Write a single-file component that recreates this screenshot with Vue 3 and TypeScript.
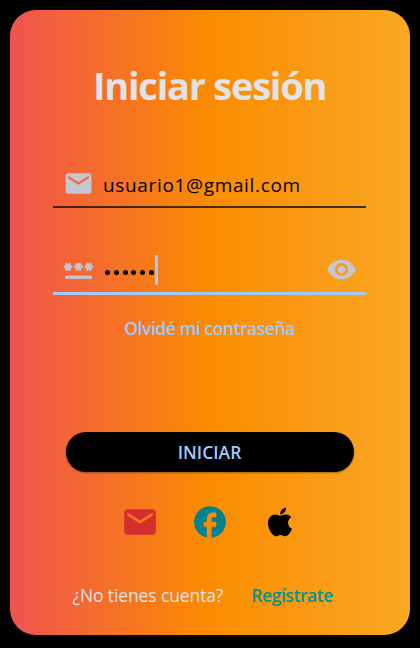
<script setup lang="ts">
import { ref } from 'vue'

const email = ref('usuario1@gmail.com')
const secret = ref('123456')

const mailPath =
  'M20 4H4c-1.1 0-1.99.9-1.99 2L2 18c0 1.1.9 2 2 2h16c1.1 0 2-.9 2-2V6c0-1.1-.9-2-2-2zm0 4-8 5-8-5V6l8 5 8-5v2z'
const socials = [
  { name: 'mail', path: mailPath },
  {
    name: 'facebook',
    path: 'M22 12c0-5.52-4.48-10-10-10S2 6.48 2 12c0 4.84 3.44 8.87 8 9.8V15H8v-3h2V9.5C10 7.57 11.57 6 13.5 6H16v3h-2c-.55 0-1 .45-1 1v2h3v3h-3v6.95c5.05-.5 9-4.76 9-9.95z',
  },
  {
    name: 'apple',
    path: 'M17.05 20.28c-.98.95-2.05.8-3.08.35-1.09-.46-2.09-.48-3.24 0-1.44.62-2.2.44-3.06-.35C2.79 15.25 3.51 7.59 9.05 7.31c1.35.07 2.29.74 3.08.8 1.18-.24 2.31-.93 3.57-.84 1.51.12 2.65.72 3.4 1.8-3.12 1.87-2.38 5.98.48 7.13-.57 1.5-1.31 2.99-2.54 4.09zM12.03 7.25c-.15-2.23 1.66-4.07 3.74-4.25.29 2.58-2.34 4.5-3.74 4.25z',
  },
]
</script>

<template>
  <main class="screen">
    <section class="card">
      <h1 class="title">Iniciar sesión</h1>
      <div class="field">
        <svg class="icon" viewBox="0 0 24 24"><path :d="mailPath" /></svg>
        <span class="value">{{ email }}</span>
      </div>
      <div class="field focused">
        <svg class="icon password" viewBox="0 0 24 24">
          <path
            d="M2 17h20v2H2v-2zm1.15-4.05L4 11.47l.85 1.48 1.3-.75-.85-1.48H7v-1.5H5.3l.85-1.47L4.85 7 4 8.47 3.15 7l-1.3.75.85 1.47H1v1.5h1.7l-.85 1.48 1.3.75zm6.7-.75 1.3.75.85-1.48.85 1.48 1.3-.75-.85-1.48H15v-1.5h-1.7l.85-1.47-1.3-.75L12 8.47 11.15 7l-1.3.75.85 1.47H9v1.5h1.7l-.85 1.48zM23 9.22h-1.7l.85-1.47-1.3-.75L20 8.47 19.15 7l-1.3.75.85 1.47H17v1.5h1.7l-.85 1.48 1.3.75.85-1.48.85 1.48 1.3-.75-.85-1.48H23v-1.5z"
          />
        </svg>
        <span class="dots"><i v-for="(_, i) in secret" :key="i" class="dot"></i></span>
        <span class="caret"></span>
        <svg class="icon eye" viewBox="0 0 24 24">
          <path
            d="M12 4.5C7 4.5 2.73 7.61 1 12c1.73 4.39 6 7.5 11 7.5s9.27-3.11 11-7.5c-1.73-4.39-6-7.5-11-7.5zM12 17c-2.76 0-5-2.24-5-5s2.24-5 5-5 5 2.24 5 5-2.24 5-5 5zm0-8c-1.66 0-3 1.34-3 3s1.34 3 3 3 3-1.34 3-3-1.34-3-3-3z"
          />
        </svg>
      </div>
      <a class="forgot">Olvidé mi contraseña</a>
      <button class="submit" type="button">INICIAR</button>
      <div class="socials">
        <svg v-for="s in socials" :key="s.name" :class="['social', s.name]" viewBox="0 0 24 24">
          <path :d="s.path" />
        </svg>
      </div>
      <footer class="foot">
        <span class="ask">¿No tienes cuenta?</span>
        <a class="register">Regístrate</a>
      </footer>
    </section>
  </main>
</template>

<style>
body {
  background: #000;
}
</style>

<style scoped>
.screen {
  box-sizing: border-box;
  height: 648px;
  padding: 10px 10.5px 13px 9.6px;
  background: #000;
  font-family: 'Open Sans', 'Noto Sans', sans-serif;
  white-space: nowrap;
}
.card {
  box-sizing: border-box;
  display: flex;
  flex-direction: column;
  align-items: center;
  height: 625px;
  border-radius: 26px;
  background: linear-gradient(90deg, #ef5350, #fb8c00 50%, #f9a825);
}
.title {
  margin: 48px 0 0;
  height: 54px;
  line-height: 54px;
  font-size: 38px;
  font-weight: 700;
  letter-spacing: -1.25px;
  color: #e2e2e9;
}
.field {
  box-sizing: border-box;
  display: flex;
  align-items: center;
  width: 313px;
  height: 50px;
  margin-top: 46px;
  padding: 2px 9px 0 10px;
  border-bottom: 2px solid rgba(20, 14, 10, 0.78);
}
.field.focused {
  height: 52px;
  margin-top: 35px;
  padding-top: 4px;
  border-bottom: 3px solid #9ecaff;
}
.icon {
  width: 31px;
  height: 31px;
  flex: none;
  fill: #c4c6d0;
}
.password {
  stroke: #c4c6d0;
  stroke-width: 0.65px;
}
.value {
  margin: 3px 0 0 9px;
  font-size: 19px;
  letter-spacing: 0.65px;
  color: #000;
}
.dots {
  display: flex;
  gap: 3.75px;
  margin: 5px 0 0 11px;
}
.dot {
  width: 5px;
  height: 5px;
  border-radius: 50%;
  background: #000;
}
.caret {
  width: 3px;
  height: 30px;
  margin-left: 1.5px;
  background: #9ecaff;
}
.eye {
  margin: 0 0 0 auto;
}
.forgot {
  margin-top: 20px;
  height: 26px;
  line-height: 26px;
  font-size: 17.5px;
  font-weight: 600;
  letter-spacing: -0.45px;
  color: #9ecaff;
}
.submit {
  width: 288px;
  height: 40px;
  margin-top: 91px;
  padding: 0;
  border: 0;
  border-radius: 20px;
  background: #000;
  box-shadow: 0 1px 2px rgba(0, 0, 0, 0.35);
  color: #9ecaff;
  font: 600 17.5px/40px 'Open Sans', 'Noto Sans', sans-serif;
}
.socials {
  display: flex;
  gap: 32px;
  margin-top: 31px;
}
.social {
  width: 38px;
  height: 38px;
}
.mail {
  fill: #d32f2f;
}
.facebook {
  fill: #00838f;
}
.apple {
  fill: #000;
}
.foot {
  display: flex;
  gap: 28px;
  width: 274px;
  margin-top: 41px;
  line-height: 26px;
  font-size: 17.5px;
  letter-spacing: -0.12px;
  color: #e2e2e9;
}
.register {
  font-weight: 600;
  letter-spacing: -0.45px;
  color: #00968f;
}
</style>
